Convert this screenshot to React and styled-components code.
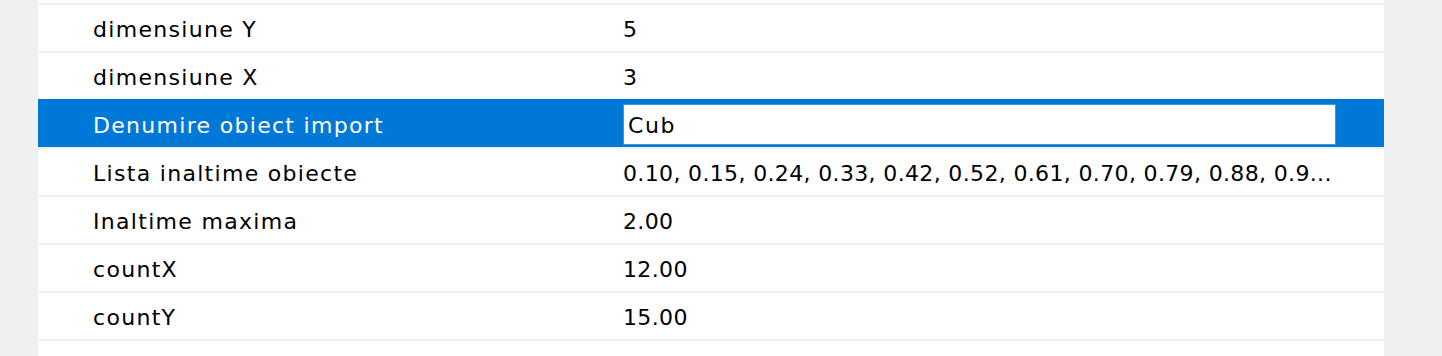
import { createGlobalStyle, styled } from "styled-components";

const GlobalStyle = createGlobalStyle`
  html, body {
    margin: 0;
    padding: 0;
    background: #f0f0f0;
  }
  body {
    font-family: "DejaVu Sans", "Noto Sans", sans-serif;
  }
`;

const rows = [
  { label: "dimensiune Y", value: "5" },
  { label: "dimensiune X", value: "3" },
  { label: "Denumire obiect import", value: "Cub", selected: true },
  {
    label: "Lista inaltime obiecte",
    value: "0.10, 0.15, 0.24, 0.33, 0.42, 0.52, 0.61, 0.70, 0.79, 0.88, 0.9...",
  },
  { label: "Inaltime maxima", value: "2.00" },
  { label: "countX", value: "12.00" },
  { label: "countY", value: "15.00" },
];

export default function App() {
  return (
    <>
      <GlobalStyle />
      <Page>
        <Grid>
          {rows.map((r) => (
            <Row key={r.label} $selected={r.selected}>
              <Label>{r.label}</Label>
              {r.selected ? (
                <EditBox>{r.value}</EditBox>
              ) : (
                <Value>{r.value}</Value>
              )}
            </Row>
          ))}
        </Grid>
      </Page>
    </>
  );
}

const Page = styled.div`
  width: 1442px;
  height: 356px;
  display: flex;
  padding-left: 38px;
  box-sizing: border-box;
  overflow: hidden;
`;
const Grid = styled.div`
  width: 1346px;
  height: 356px;
  background: #ffffff;
  padding-top: 3px;
  box-sizing: border-box;
`;
const Row = styled.div`
  display: grid;
  grid-template-columns: 585px 1fr;
  align-items: center;
  height: 48px;
  box-sizing: border-box;
  border-top: 2px solid #f0f0f0;
  &:last-child {
    height: 50px;
    border-bottom: 2px solid #f0f0f0;
  }
  background: ${(p) => (p.$selected ? "#0078d7" : "transparent")};
  border-top-color: ${(p) => (p.$selected ? "#0078d7" : "#f0f0f0")};
  color: ${(p) => (p.$selected ? "#ffffff" : "#000000")};
`;
const Label = styled.div`
  padding-left: 55px;
  padding-top: 3px;
  font-size: 22px;
  letter-spacing: 1.3px;
  white-space: nowrap;
`;
const Value = styled.div`
  padding-top: 3px;
  font-size: 22px;
  letter-spacing: 0.35px;
  white-space: nowrap;
`;
const EditBox = styled.div`
  height: 41px;
  width: 713px;
  box-sizing: border-box;
  border: 1px solid #3d93df;
  background: #ffffff;
  color: #000000;
  font-size: 22px;
  letter-spacing: 1.6px;
  display: flex;
  align-items: center;
  padding: 3px 0 0 4px;
`;
